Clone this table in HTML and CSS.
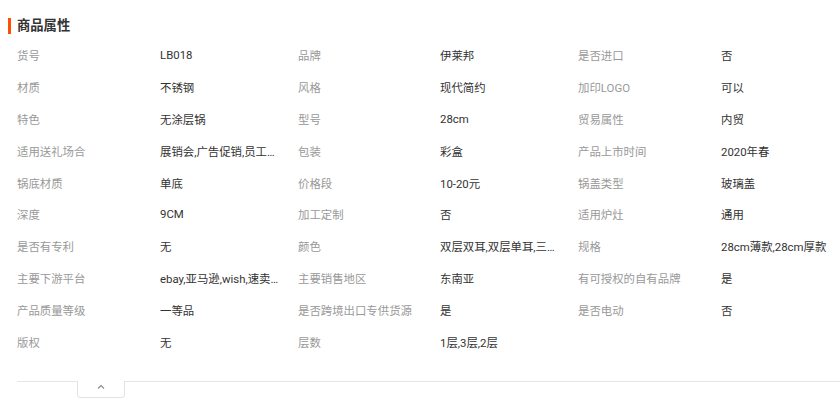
FILE: index.html
```html
<!DOCTYPE html>
<html lang="zh">
<head>
  <meta charset="UTF-8">
  <title>商品属性</title>
  <link rel="stylesheet" href="styles.css">
</head>
<body>
  <div class="attrs">
    <h3 class="attrs-title">商品属性</h3>
    <div class="attrs-grid">
      <span class="k">货号</span><span class="v">LB018</span>
      <span class="k">品牌</span><span class="v">伊莱邦</span>
      <span class="k">是否进口</span><span class="v">否</span>

      <span class="k">材质</span><span class="v">不锈钢</span>
      <span class="k">风格</span><span class="v">现代简约</span>
      <span class="k">加印LOGO</span><span class="v">可以</span>

      <span class="k">特色</span><span class="v">无涂层锅</span>
      <span class="k">型号</span><span class="v">28cm</span>
      <span class="k">贸易属性</span><span class="v">内贸</span>

      <span class="k">适用送礼场合</span><span class="v">展销会,广告促销,员工福利,商务礼品</span>
      <span class="k">包装</span><span class="v">彩盒</span>
      <span class="k">产品上市时间</span><span class="v">2020年春</span>

      <span class="k">锅底材质</span><span class="v">单底</span>
      <span class="k">价格段</span><span class="v">10-20元</span>
      <span class="k">锅盖类型</span><span class="v">玻璃盖</span>

      <span class="k">深度</span><span class="v">9CM</span>
      <span class="k">加工定制</span><span class="v">否</span>
      <span class="k">适用炉灶</span><span class="v">通用</span>

      <span class="k">是否有专利</span><span class="v">无</span>
      <span class="k">颜色</span><span class="v">双层双耳,双层单耳,三层双耳</span>
      <span class="k">规格</span><span class="v wide">28cm薄款,28cm厚款</span>

      <span class="k">主要下游平台</span><span class="v">ebay,亚马逊,wish,速卖通</span>
      <span class="k">主要销售地区</span><span class="v">东南亚</span>
      <span class="k">有可授权的自有品牌</span><span class="v">是</span>

      <span class="k">产品质量等级</span><span class="v">一等品</span>
      <span class="k">是否跨境出口专供货源</span><span class="v">是</span>
      <span class="k">是否电动</span><span class="v">否</span>

      <span class="k">版权</span><span class="v">无</span>
      <span class="k">层数</span><span class="v">1层,3层,2层</span>
      <span class="k"></span><span class="v"></span>
    </div>
    <div class="attrs-foot">
      <button class="fold" type="button">
        <svg width="8" height="5" viewBox="0 0 8 5"><path d="M1 4.5 L4 1.5 L7 4.5" fill="none" stroke="#8a8a8a" stroke-width="1.1"/></svg>
      </button>
    </div>
  </div>
</body>
</html>
```

FILE: styles.css
```css
body {
  margin: 0;
  background: #fff;
  font-family: Roboto, "Noto Sans CJK SC", sans-serif;
  font-size: 11.4px;
  color: #333;
}

.attrs {
  padding: 18px 0 0 8px;
}

.attrs-title {
  margin: 0;
  height: 16px;
  line-height: 16px;
  padding-left: 6px;
  border-left: 3px solid #ff5000;
  font-size: 13.3px;
  font-weight: bold;
  color: #333;
}

.attrs-grid {
  display: grid;
  grid-template-columns: 143px 138px 142px 138px 143px 1fr;
  grid-auto-rows: 31.9px;
  margin-top: 5px;
  padding-left: 9px;
  align-items: center;
}

.k {
  color: #999;
  white-space: nowrap;
}

.v {
  color: #333;
  max-width: 120px;
  white-space: nowrap;
  overflow: hidden;
  text-overflow: ellipsis;
}

.v.wide {
  max-width: none;
}

.attrs-foot {
  margin: 23px 0 0 9px;
  border-top: 1px solid #e6e6e6;
  height: 22px;
}

.fold {
  display: flex;
  align-items: center;
  justify-content: center;
  margin: -1px 0 0 60px;
  width: 48px;
  height: 17px;
  padding: 0 0 4px;
  background: #fff;
  border: 1px solid #e3e3e3;
  border-top: none;
  border-radius: 0 0 4px 4px;
}
```
